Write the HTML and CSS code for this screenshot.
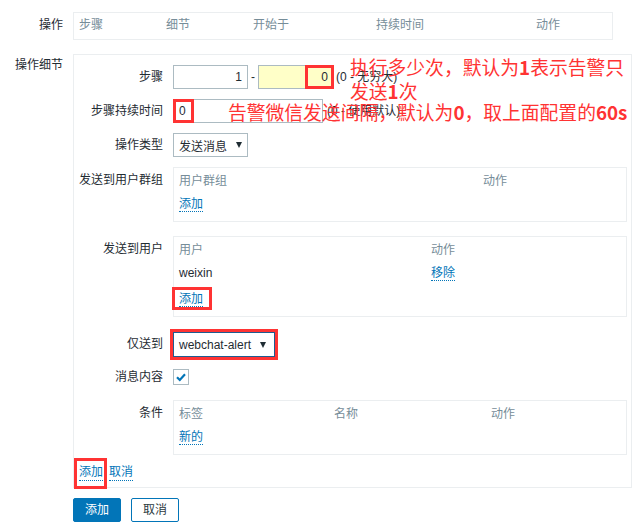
FILE: index.html
```html
<!DOCTYPE html>
<html lang="zh-CN">
<head>
  <meta charset="UTF-8">
  <meta name="viewport" content="width=device-width, initial-scale=1.0">
  <title>操作细节</title>
  <link rel="stylesheet" href="styles.css">
</head>
<body>
  <div class="form">
    <div class="form-row">
      <div class="form-label top-label">操作</div>
      <div class="op-table">
        <span>步骤</span><span>细节</span><span>开始于</span><span>持续时间</span><span>动作</span>
      </div>
    </div>

    <div class="form-row">
      <div class="form-label detail-label">操作细节</div>
      <div class="detail-box">
        <!-- 红色说明文字 -->
        <div class="note note-steps">执行多少次，默认为<b>1</b>表示告警只<br>发送<b>1</b>次</div>
        <div class="note note-duration">告警微信发送间隔，默认为<b>0</b>，取上面配置的<b>60s</b></div>

        <div class="row">
          <div class="row-label">步骤</div>
          <div class="field">
            <div class="input step-from">1</div>
            <span class="dash">-</span>
            <div class="input step-to">0<span class="mark mark-step"></span></div>
            <span class="hint">(0 - 无穷大)</span>
          </div>
        </div>

        <div class="row">
          <div class="row-label">步骤持续时间</div>
          <div class="field">
            <div class="input step-duration">0<span class="mark mark-duration"></span></div>
            <span class="hint hint-duration">(0 - 使用默认)</span>
          </div>
        </div>

        <div class="row">
          <div class="row-label">操作类型</div>
          <div class="field">
            <div class="select op-type">发送消息<span class="arrow"></span></div>
          </div>
        </div>

        <div class="row row-group">
          <div class="row-label boxed">发送到用户群组</div>
          <div class="sub-table group-table">
            <div class="sub-head"><span>用户群组</span><span>动作</span></div>
            <div class="sub-line"><span><a class="link" href="#">添加</a></span></div>
          </div>
        </div>

        <div class="row row-users">
          <div class="row-label boxed">发送到用户</div>
          <div class="sub-table user-table">
            <div class="sub-head"><span>用户</span><span>动作</span></div>
            <div class="sub-line"><span>weixin</span><span><a class="link" href="#">移除</a></span></div>
            <div class="sub-line add-line"><span><a class="link" href="#">添加<span class="mark mark-add-user"></span></a></span></div>
          </div>
        </div>

        <div class="row row-media">
          <div class="row-label media-label">仅送到</div>
          <div class="field">
            <div class="select media-select">webchat-alert<span class="arrow"></span></div>
          </div>
        </div>

        <div class="row row-check">
          <div class="row-label check-label">消息内容</div>
          <div class="field">
            <span class="checkbox">
              <svg width="14" height="14" viewBox="0 0 14 14"><path d="M3 7.2 L5.8 10 L11 4.2" fill="none" stroke="#0275b8" stroke-width="2.2"/></svg>
            </span>
          </div>
        </div>

        <div class="row row-cond">
          <div class="row-label boxed">条件</div>
          <div class="sub-table cond-table">
            <div class="sub-head"><span>标签</span><span>名称</span><span>动作</span></div>
            <div class="sub-line"><span><a class="link" href="#">新的</a></span></div>
          </div>
        </div>

        <div class="detail-links">
          <a class="link" href="#">添加<span class="mark mark-add-op"></span></a>
          <a class="link" href="#">取消</a>
        </div>
      </div>
    </div>

    <div class="buttons">
      <button class="btn btn-primary">添加</button>
      <button class="btn btn-alt">取消</button>
    </div>
  </div>
</body>
</html>
```

FILE: styles.css
```css
* {
  box-sizing: border-box;
  margin: 0;
  padding: 0;
}
body {
  font-family: "Liberation Sans", Arial, "Noto Sans CJK SC", sans-serif;
  font-size: 12px;
  color: #1f2c33;
  background: #fff;
  padding-top: 12px;
}
.form-row {
  display: flex;
}
.form-row + .form-row {
  margin-top: 14px;
}
.form-label {
  width: 63px;
  margin-right: 10px;
  text-align: right;
  flex-shrink: 0;
}
.top-label {
  line-height: 26px;
}
.detail-label {
  line-height: 22px;
}
.op-table {
  width: 540px;
  height: 28px;
  border: 1px solid #ebeef0;
  display: grid;
  grid-template-columns: 87px 87px 123px 160px 1fr;
  padding-left: 5px;
  line-height: 24px;
  color: #768d99;
}
.detail-box {
  position: relative;
  width: 559px;
  border: 1px solid #ebeef0;
  padding: 10px 4px 6px 0;
}

/* 红色说明 */
.note {
  position: absolute;
  z-index: 2;
  color: #ff3333;
  font-family: "Noto Sans CJK SC", sans-serif;
  font-size: 18.8px;
  line-height: 24px;
  white-space: nowrap;
}
.note b {
  font-weight: bold;
}
.note-steps {
  left: 276px;
  top: 0;
}
.note-duration {
  left: 154px;
  top: 45px;
}
.mark {
  position: absolute;
  border: 3px solid #ff3333;
  z-index: 3;
}

/* 行 */
.row {
  display: flex;
  margin-bottom: 10px;
}
.row-label {
  width: 89px;
  margin-right: 10px;
  text-align: right;
  line-height: 24px;
  flex-shrink: 0;
}
.row-label.boxed {
  padding-top: 1px;
}
.row-group {
  margin-bottom: 14px;
}
.row-users {
  margin-bottom: 15px;
}
.row-media {
  margin-bottom: 12px;
}
.row-check {
  margin-bottom: 15px;
}
.row-cond {
  margin-bottom: 9px;
}
.field {
  display: flex;
  align-items: center;
}
.input {
  position: relative;
  height: 24px;
  line-height: 22px;
  border: 1px solid #acbbc2;
  background: #fff;
  padding: 0 5px;
}
.step-from {
  width: 75px;
  text-align: right;
}
.dash {
  width: 10px;
  text-align: center;
}
.step-to {
  width: 76px;
  text-align: right;
  background: #ffffc8;
}
.mark-step {
  right: -1px;
  top: -1px;
  bottom: -1px;
  width: 29px;
}
.hint {
  margin-left: 2px;
  line-height: 24px;
}
.step-duration {
  width: 150px;
}
.mark-duration {
  left: -1px;
  top: -1px;
  bottom: -1px;
  width: 21px;
}
.hint-duration {
  margin-left: 4px;
}
.select {
  display: flex;
  align-items: center;
  justify-content: space-between;
  height: 24px;
  border: 1px solid #acbbc2;
  padding: 0 5px;
  background: #fff;
}
.arrow {
  width: 0;
  height: 0;
  border-left: 3.5px solid transparent;
  border-right: 3.5px solid transparent;
  border-top: 6px solid #1f2c33;
}
.op-type {
  width: 75px;
}
.media-select {
  width: 102px;
  height: 25px;
  border-color: #1e5c91;
  padding-right: 8px;
  outline: 3px solid #ff3333;
}
.media-label {
  line-height: 25px;
}
.check-label {
  line-height: 16px;
}
.checkbox {
  display: flex;
  align-items: center;
  justify-content: center;
  width: 16px;
  height: 16px;
  border: 1px solid #acbbc2;
  background: #fff;
}

/* 子表格 */
.sub-table {
  flex: 1;
  border: 1px solid #ebeef0;
  padding: 1px 5px 6px;
}
.sub-head,
.sub-line {
  display: grid;
}
.sub-head {
  height: 24px;
  line-height: 24px;
  color: #768d99;
}
.sub-line {
  height: 22px;
  line-height: 22px;
}
.sub-line.add-line {
  height: 26px;
  padding-top: 4px;
}
.group-table .sub-head,
.group-table .sub-line {
  grid-template-columns: 304px 1fr;
}
.user-table .sub-head,
.user-table .sub-line {
  grid-template-columns: 252px 1fr;
}
.cond-table .sub-head,
.cond-table .sub-line {
  grid-template-columns: 155px 157px 1fr;
}
.link {
  position: relative;
  color: #0275b8;
  text-decoration: none;
  border-bottom: 1px dotted #0275b8;
}
.mark-add-user {
  left: -7px;
  right: -9px;
  top: -5px;
  bottom: -4px;
}
.detail-links {
  padding-left: 5px;
  line-height: 16px;
  display: flex;
  gap: 6px;
}
.mark-add-op {
  left: -5px;
  right: -4px;
  top: -6px;
  bottom: -9px;
}

/* 按钮 */
.buttons {
  display: flex;
  gap: 10px;
  margin: 10px 0 0 73px;
}
.btn {
  width: 48px;
  height: 24px;
  border: 1px solid #0275b8;
  border-radius: 2px;
  font: inherit;
  line-height: 22px;
  text-align: center;
  cursor: pointer;
}
.btn-primary {
  background: #0275b8;
  color: #fff;
}
.btn-alt {
  background: #fff;
  color: #2b3a42;
}
```
